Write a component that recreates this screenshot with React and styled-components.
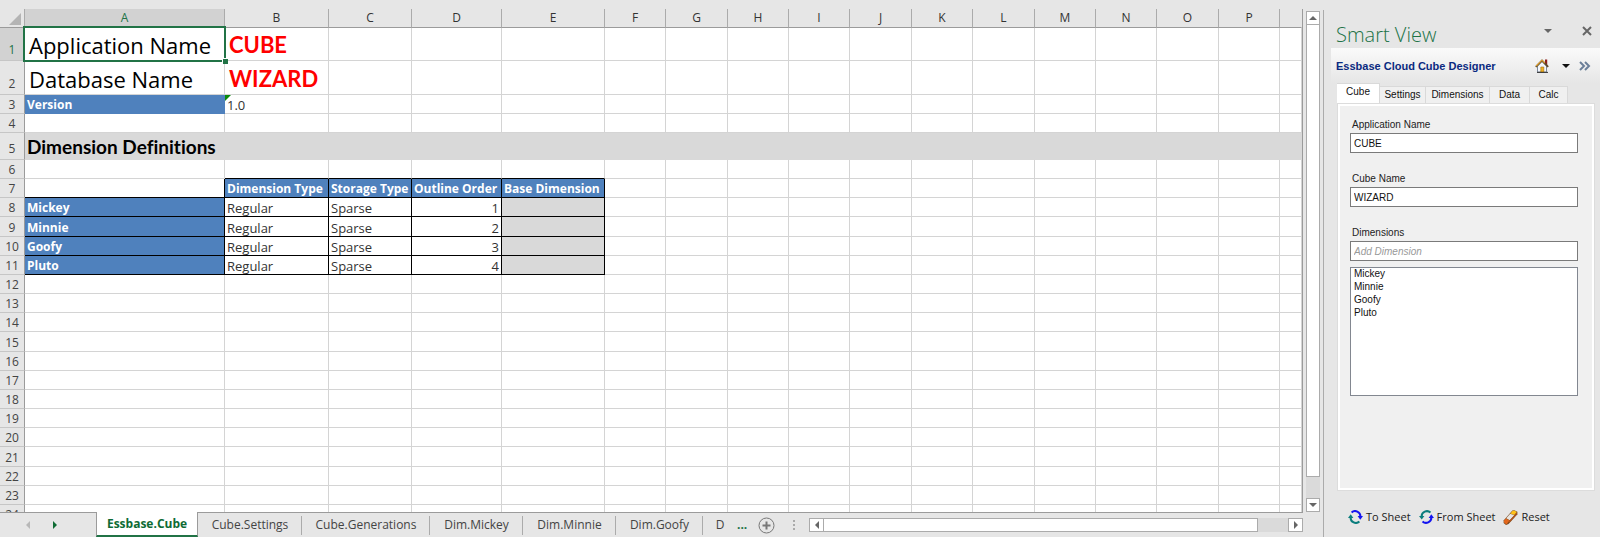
import React from "react";
import styled, { createGlobalStyle } from "styled-components";

const uiFont = '"Open Sans", "Noto Sans", sans-serif';
const formFont = '"Liberation Sans", Arial, sans-serif';

const GlobalStyle = createGlobalStyle`
  *, *::before, *::after { box-sizing: border-box; }
  body { margin: 0; background: #e6e6e6; font-family: ${uiFont}; font-size: 12px; color: #000; }
  button { border: 0; padding: 0; margin: 0; background: none; font: inherit; color: inherit; }
`;

const Window = styled.div`
  display: flex;
  height: 100vh;
  overflow: hidden;
  background: #e6e6e6;
`;

const Workbook = styled.main`
  flex: 1;
  min-width: 0;
  display: flex;
  flex-direction: column;
`;

const SheetArea = styled.div`
  flex: 1;
  min-height: 0;
  display: flex;
`;

const GridFrame = styled.div`
  flex: 1;
  min-width: 0;
  overflow: hidden;
  padding-top: 9px;
`;

const Grid = styled.table`
  width: 100%;
  table-layout: fixed;
  border-collapse: separate;
  border-spacing: 0;
  background: #fff;
  border-right: 1px solid #9b9b9b;
`;

const ColumnHead = styled.th`
  height: 19px;
  padding: 0;
  background: ${(p) => (p.$active ? "#d2d2d2" : "#e6e6e6")};
  color: ${(p) => (p.$active ? "#217346" : "#333")};
  border-right: 1px solid ${(p) => (p.$last ? "#e6e6e6" : "#ababab")};
  border-bottom: 1px solid #9b9b9b;
  font-weight: 400;
  line-height: 18px;
`;

const SelectAll = styled.button`
  display: block;
  width: 24px;
  height: 18px;
  padding: 4px 3px 2px 9px;
`;

const RowHead = styled.th`
  height: ${(p) => p.$height}px;
  padding: 0;
  background: ${(p) => (p.$active ? "#d2d2d2" : "#e6e6e6")};
  color: ${(p) => (p.$active ? "#217346" : "#444")};
  border-right: 1px solid #9b9b9b;
  border-bottom: 1px solid #c6c6c6;
  font-weight: 400;
  line-height: ${(p) => (p.$height > 20 ? 20 : 16)}px;
  vertical-align: bottom;
`;

const fills = { key: "#4f81bd", band: "#d9d9d9", none: "#fff" };

const Cell = styled.td`
  position: relative;
  padding: 0 2px;
  background: ${(p) => fills[p.$fill || "none"]};
  border-right: 1px solid
    ${(p) => (p.$darkRight ? "#000" : p.$flat ? fills[p.$fill] : "#d4d4d4")};
  border-bottom: 1px solid
    ${(p) => (p.$darkBottom ? "#000" : p.$flat ? fills[p.$fill] : "#d4d4d4")};
  color: ${(p) => (p.$fill === "key" ? "#fff" : "#333")};
  font-size: ${(p) => (p.$fill === "key" ? 12 : 13)}px;
  font-weight: ${(p) => (p.$fill === "key" ? 700 : 400)};
  line-height: 16px;
  text-align: ${(p) => (p.$number ? "right" : "left")};
  vertical-align: bottom;
  white-space: nowrap;
`;

const TitleText = styled.span`
  display: block;
  padding-left: 2px;
  font-size: 22px;
  line-height: 30px;
  color: #000;
`;

const RedText = styled(TitleText)`
  font-family: Lato, sans-serif;
  font-weight: 700;
  color: #f00;
`;

const SectionText = styled.span`
  display: block;
  font-family: Lato, sans-serif;
  font-size: 19px;
  font-weight: 700;
  font-variant-ligatures: none;
  line-height: 24px;
  color: #000;
`;

const Selection = styled.span`
  position: absolute;
  inset: -2px;
  border: 2px solid #217346;
  z-index: 1;

  &::after {
    content: "";
    position: absolute;
    right: -4px;
    bottom: -4px;
    width: 6px;
    height: 6px;
    background: #217346;
    border: solid #fff;
    border-width: 1px 0 0 1px;
  }
`;

const ErrorMark = styled.svg`
  position: absolute;
  left: 0;
  top: 0;
`;

const VerticalBar = styled.div`
  display: flex;
  flex-direction: column;
  width: 14px;
  margin: 11px 3px 0;
  background: #dadada;
`;

const ArrowButton = styled.button`
  display: grid;
  place-items: center;
  flex: none;
  width: ${(p) => (p.$wide ? 15 : 14)}px;
  height: 14px;
  background: #fff;
  border: 1px solid #ababab;
`;

const VerticalThumb = styled.div`
  flex: 1;
  margin: -1px 0 21px;
  background: #fff;
  border: 1px solid #ababab;
`;

const TabBar = styled.div`
  display: flex;
  height: 25px;
  margin-right: 20px;
`;

const TabNav = styled.div`
  display: flex;
  align-items: center;
  width: 96px;
  gap: 21px;
  padding-left: 25px;
  border-top: 1px solid #9b9b9b;
`;

const NavButton = styled.button`
  display: grid;
  place-items: center;
  width: 6px;
  height: 12px;
`;

const SheetTab = styled.button`
  width: ${(p) => p.$width}px;
  flex: none;
  display: flex;
  align-items: center;
  justify-content: center;
  position: relative;
  padding-bottom: ${(p) => (p.$active ? 0 : 1)}px;
  background: ${(p) => (p.$active ? "#fff" : "transparent")};
  color: ${(p) => (p.$active ? "#0e6b34" : "#444")};
  font-weight: ${(p) => (p.$active ? 700 : 400)};
  border: solid #9b9b9b;
  border-width: ${(p) => (p.$active ? "0 1px 2px" : "1px 0 0")};
  ${(p) => p.$active && "border-bottom-color: #217346;"}

  &::after {
    content: "";
    display: ${(p) => (p.$divider ? "block" : "none")};
    position: absolute;
    right: 0;
    top: 3px;
    width: 1px;
    height: 19px;
    background: #ababab;
  }
`;

const TabTools = styled.div`
  flex: 1;
  min-width: 0;
  display: flex;
  align-items: center;
  border-top: 1px solid #9b9b9b;
`;

const MoreTabs = styled.button`
  width: 13px;
  color: #217346;
  font-weight: 700;
  line-height: 18px;
  text-align: left;
`;

const AddSheet = styled.button`
  width: 17px;
  height: 17px;
  margin-left: 8px;
`;

const Grip = styled.svg`
  flex: none;
  margin: 0 14px 0 18px;
`;

const HorizontalBar = styled.div`
  flex: 1;
  display: flex;
  height: 14px;
  background: #dadada;
`;

const HorizontalThumb = styled.div`
  flex: 1;
  margin: 0 30px 0 -1px;
  background: #fff;
  border: 1px solid #ababab;
`;

const Panel = styled.aside`
  width: 277px;
  flex: none;
  display: flex;
  flex-direction: column;
  margin-top: 10px;
  border-left: 1px solid #ababab;
  padding-left: 7px;
`;

const PanelTitleBar = styled.header`
  display: flex;
  align-items: center;
  height: 38px;
  padding: 4px 3px 0 5px;
`;

const PanelTitle = styled.h1`
  flex: 1;
  margin: 0;
  padding-top: 7px;
  font-size: 20px;
  font-weight: 300;
  line-height: 26px;
  color: #217346;
`;

const IconButton = styled.button`
  display: grid;
  place-items: center;
  flex: none;
  width: ${(p) => p.$width}px;
  height: 18px;
`;

const Toolbar = styled.div`
  display: flex;
  align-items: center;
  height: 35px;
  padding: 0 9px 0 5px;
  background: linear-gradient(#fafafa, #e6e6e6);
`;

const ToolbarTitle = styled.h2`
  flex: 1;
  margin: 0;
  font-family: ${formFont};
  font-size: 11px;
  line-height: 16px;
  font-weight: 700;
  color: #0a2a80;
`;

const FormTabs = styled.div`
  display: flex;
  align-items: flex-end;
  height: 20px;
  padding-left: 6px;
`;

const FormTab = styled.button`
  width: ${(p) => p.$width}px;
  height: ${(p) => (p.$active ? 20 : 17)}px;
  padding-bottom: ${(p) => (p.$active ? 3 : 0)}px;
  background: ${(p) => (p.$active ? "#fff" : "#f0f0f0")};
  border: solid #d9d9d9;
  border-width: 1px 1px 0 0;
  font-family: ${formFont};
  font-size: 10px;
  line-height: 14px;
  color: #111;
`;

const FormPage = styled.form`
  flex: 1;
  display: flex;
  flex-direction: column;
  margin: 0 5px 0 6px;
  padding: 13px 14px 0 10px;
  background: #f0f0f0;
  border: 3px solid #fff;
  outline: 1px solid #dcdcdc;
  outline-offset: -1px;
`;

const Field = styled.div`
  display: flex;
  flex-direction: column;
  margin-bottom: ${(p) => (p.$tight ? 6 : 20)}px;
`;

const Label = styled.label`
  padding-left: 2px;
  margin-bottom: 2px;
  font-family: ${formFont};
  font-size: 10px;
  line-height: 12px;
  color: #222;
`;

const TextBox = styled.input`
  width: 100%;
  height: 20px;
  padding: 0 3px;
  background: #fff;
  border: 1px solid #7a7a7a;
  border-radius: 0;
  font-family: ${formFont};
  font-size: 10px;
  line-height: 14px;
  color: #111;

  &::placeholder { color: #999; font-style: italic; opacity: 1; }
`;

const ListBox = styled.select`
  width: 100%;
  height: 129px;
  padding: 0 3px;
  background: #fff;
  border: 1px solid #828790;
  border-radius: 0;
  overflow: hidden;
  font-family: ${formFont};
  font-size: 10px;
  color: #111;

  option { padding: 0; min-height: 13px; line-height: 13px; height: 13px; }
`;

const Actions = styled.footer`
  display: flex;
  align-items: center;
  gap: 8px;
  height: 46px;
  padding: 6px 0 0 17px;
`;

const Action = styled.button`
  display: flex;
  align-items: center;
  gap: 3px;
  font-size: 11px;
  line-height: 16px;
  color: #222;
  white-space: nowrap;
`;

function Triangle({ dir, color = "#666", size = 4 }) {
  const s = size;
  const shapes = {
    up: `0,${s} ${s * 2},${s} ${s},0`,
    down: `0,0 ${s * 2},0 ${s},${s}`,
    left: `${s},0 ${s},${s * 2} 0,${s}`,
    right: `0,0 0,${s * 2} ${s},${s}`,
  };
  const tall = dir === "left" || dir === "right";
  return (
    <svg width={tall ? s : s * 2} height={tall ? s * 2 : s} aria-hidden="true">
      <polygon points={shapes[dir]} fill={color} />
    </svg>
  );
}

function HomeIcon() {
  return (
    <svg width="14" height="14" viewBox="0 0 14 14" aria-hidden="true">
      <path d="M10 .5h2.2v6H10z" fill="#8c1c1c" />
      <path d="M2.5 7 7 2.4 11.5 7v6h-9z" fill="#f4f6fa" stroke="#7d8899" strokeWidth="1" />
      <path d="M5.8 8h3v5h-3z" fill="#f0b020" stroke="#9a6b10" strokeWidth=".6" />
      <path d="M.8 7.8 7 1.5l6.2 6.3" fill="none" stroke="#5e4a2a" strokeWidth="1.8" />
      <path d="M1.2 7 7 1.2 9.8 4" fill="none" stroke="#e0a030" strokeWidth="1.1" />
      <path d="M2 13.4h11" stroke="#333" />
    </svg>
  );
}

function SyncIcon({ flip }) {
  const first = flip ? "#0b7d7d" : "#1414f0";
  const second = flip ? "#1414f0" : "#0b7d7d";
  return (
    <svg width="15" height="14" viewBox="0 0 15 14" aria-hidden="true">
      {flip ? (
        <>
          <path d="M11.5 2.6A5.3 5.3 0 0 0 2.6 6.5" fill="none" stroke={first} strokeWidth="2" />
          <path d="M0 6h5.4L2.7 9.6z" fill={first} />
          <path d="M3.5 11.4a5.3 5.3 0 0 0 8.9-3.9" fill="none" stroke={second} strokeWidth="2" />
          <path d="M15 8H9.6l2.7-3.8z" fill={second} />
        </>
      ) : (
        <>
          <path d="M3.6 2.4A5.3 5.3 0 0 1 12.4 6.5" fill="none" stroke={first} strokeWidth="2" />
          <path d="M9.6 6H15l-2.7 3.8z" fill={first} />
          <path d="M11.4 11.6A5.3 5.3 0 0 1 2.6 7.5" fill="none" stroke={second} strokeWidth="2" />
          <path d="M0 8h5.4L2.7 4.2z" fill={second} />
        </>
      )}
    </svg>
  );
}

function EraserIcon() {
  return (
    <svg width="15" height="15" viewBox="0 0 15 15" aria-hidden="true">
      <path d="M9.4.6 11.4.2l3 1.6v2.4L5.6 14l-2.6 1L.6 13v-2.6z" fill="#7a4a20" />
      <path d="M9.4 1 11.4.6l2.4 1.4-2.6 3-3.8-1.6z" fill="#ffc21a" />
      <path d="M7.2 3.7l4 1.6-4.4 5-3.6-2z" fill="#e8e4e0" />
      <path d="M3.1 8.6l3.4 2-3 3.8L1 12.6v-2z" fill="#e2661c" />
      <path d="M11.3 5.4l2.7-3v1.8L6 13v-2z" fill="#b5541a" />
    </svg>
  );
}

const columns = [
  ["A", 200], ["B", 104], ["C", 83], ["D", 90], ["E", 103], ["F", 61],
  ["G", 62], ["H", 61], ["I", 61], ["J", 62], ["K", 61], ["L", 62],
  ["M", 61], ["N", 61], ["O", 62], ["P", 61], ["", null],
];

const rowHeights = [
  33, 34, 19, 19, 27, 19, 19, 19, 20, 19, 19, 19,
  19, 19, 20, 19, 19, 19, 19, 19, 20, 19, 19, 19,
];

const dimensionHeads = ["Dimension Type", "Storage Type", "Outline Order", "Base Dimension"];
const dimensions = ["Mickey", "Minnie", "Goofy", "Pluto"];

function describeCell(row, col) {
  if (row === 1 && col === 0) {
    return { content: <><TitleText>Application Name</TitleText><Selection /></> };
  }
  if (row === 1 && col === 1) return { content: <RedText>CUBE</RedText> };
  if (row === 2 && col === 0) return { content: <TitleText>Database Name</TitleText> };
  if (row === 2 && col === 1) return { content: <RedText>WIZARD</RedText> };
  if (row === 3 && col === 0) return { content: "Version", fill: "key", flat: true };
  if (row === 3 && col === 1) {
    return {
      content: (
        <>
          <ErrorMark width="6" height="6" aria-hidden="true">
            <polygon points="0,0 6,0 0,6" fill="#0a8a0a" />
          </ErrorMark>
          1.0
        </>
      ),
    };
  }
  if (row === 5) {
    return {
      content: col === 0 ? <SectionText>Dimension Definitions</SectionText> : null,
      fill: "band",
      flat: true,
    };
  }
  if (row === 6 && col >= 1 && col <= 4) return { darkBottom: true };
  if (row === 7 && col === 0) return { darkRight: true, darkBottom: true };
  if (row === 7 && col <= 4) {
    return { content: dimensionHeads[col - 1], fill: "key", darkRight: true, darkBottom: true };
  }
  if (row >= 8 && row <= 11 && col <= 4) {
    const index = row - 8;
    const values = [dimensions[index], "Regular", "Sparse", index + 1, null];
    return {
      content: values[col],
      fill: col === 0 ? "key" : col === 4 ? "band" : "none",
      number: col === 3,
      darkRight: true,
      darkBottom: true,
    };
  }
  return {};
}

function Spreadsheet() {
  return (
    <Grid>
      <colgroup>
        <col style={{ width: 25 }} />
        {columns.map(([name, width]) => (
          <col key={name || "rest"} style={width ? { width } : undefined} />
        ))}
      </colgroup>
      <thead>
        <tr>
          <ColumnHead>
            <SelectAll aria-label="Select all">
              <svg width="12" height="12" aria-hidden="true" display="block">
                <polygon points="12,0 12,12 0,12" fill="#b4b4b4" />
              </svg>
            </SelectAll>
          </ColumnHead>
          {columns.map(([name], i) => (
            <ColumnHead key={i} scope="col" $active={i === 0} $last={i === columns.length - 1}>
              {name}
            </ColumnHead>
          ))}
        </tr>
      </thead>
      <tbody>
        {rowHeights.map((height, r) => (
          <tr key={r}>
            <RowHead scope="row" $height={height} $active={r === 0}>{r + 1}</RowHead>
            {columns.map((_, c) => {
              const cell = describeCell(r + 1, c);
              return (
                <Cell
                  key={c}
                  $fill={cell.fill}
                  $flat={cell.flat}
                  $number={cell.number}
                  $darkRight={cell.darkRight}
                  $darkBottom={cell.darkBottom}
                >
                  {cell.content}
                </Cell>
              );
            })}
          </tr>
        ))}
      </tbody>
    </Grid>
  );
}

const sheetTabs = [
  ["Essbase.Cube", 102], ["Cube.Settings", 104], ["Cube.Generations", 128],
  ["Dim.Mickey", 93], ["Dim.Minnie", 93], ["Dim.Goofy", 87], ["D", 34],
];

const formTabs = [
  ["Cube", 43], ["Settings", 46], ["Dimensions", 64], ["Data", 40], ["Calc", 38],
];

export default function App() {
  return (
    <Window>
      <GlobalStyle />
      <Workbook>
        <SheetArea>
          <GridFrame>
            <Spreadsheet />
          </GridFrame>
          <VerticalBar>
            <ArrowButton aria-label="Scroll up"><Triangle dir="up" /></ArrowButton>
            <VerticalThumb />
            <ArrowButton aria-label="Scroll down"><Triangle dir="down" /></ArrowButton>
          </VerticalBar>
        </SheetArea>
        <TabBar>
          <TabNav>
            <NavButton aria-label="Previous sheet"><Triangle dir="left" color="#b8b8b8" /></NavButton>
            <NavButton aria-label="Next sheet"><Triangle dir="right" color="#0e6b34" /></NavButton>
          </TabNav>
          {sheetTabs.map(([name, width], i) => (
            <SheetTab key={name} $width={width} $active={i === 0} $divider={i > 0 && i < 6}>
              {name}
            </SheetTab>
          ))}
          <TabTools>
            <MoreTabs aria-label="More sheets">...</MoreTabs>
            <AddSheet aria-label="New sheet">
              <svg width="17" height="17" fill="none" stroke="#777" display="block" aria-hidden="true">
                <circle cx="8.5" cy="8.5" r="7.5" />
                <path d="M4.5 8.5h8M8.5 4.5v8" strokeWidth="2" />
              </svg>
            </AddSheet>
            <Grip width="2" height="11" fill="#aaa" aria-hidden="true">
              <path d="M0 0h2v2H0zM0 4h2v2H0zM0 8h2v2H0z" />
            </Grip>
            <HorizontalBar>
              <ArrowButton $wide aria-label="Scroll left"><Triangle dir="left" /></ArrowButton>
              <HorizontalThumb />
              <ArrowButton $wide aria-label="Scroll right"><Triangle dir="right" /></ArrowButton>
            </HorizontalBar>
          </TabTools>
        </TabBar>
      </Workbook>

      <Panel>
        <PanelTitleBar>
          <PanelTitle>Smart View</PanelTitle>
          <IconButton $width={58} aria-label="Panel options"><Triangle dir="down" /></IconButton>
          <IconButton $width={20} aria-label="Close panel">
            <svg width="10" height="10" stroke="#666" strokeWidth="2" aria-hidden="true">
              <path d="M1 1l8 8M9 1l-8 8" />
            </svg>
          </IconButton>
        </PanelTitleBar>
        <Toolbar>
          <ToolbarTitle>Essbase Cloud Cube Designer</ToolbarTitle>
          <IconButton $width={22} aria-label="Home"><HomeIcon /></IconButton>
          <IconButton $width={26} aria-label="Home options"><Triangle dir="down" color="#111" /></IconButton>
          <IconButton $width={12} aria-label="More">
            <svg width="12" height="10" fill="none" stroke="#6b7f99" strokeWidth="2" aria-hidden="true">
              <path d="M1 1l4 4-4 4M6 1l4 4-4 4" />
            </svg>
          </IconButton>
        </Toolbar>
        <FormTabs role="tablist">
          {formTabs.map(([name, width], i) => (
            <FormTab key={name} role="tab" aria-selected={i === 0} $width={width} $active={i === 0}>
              {name}
            </FormTab>
          ))}
        </FormTabs>
        <FormPage>
          <Field>
            <Label htmlFor="application-name">Application Name</Label>
            <TextBox id="application-name" defaultValue="CUBE" />
          </Field>
          <Field>
            <Label htmlFor="cube-name">Cube Name</Label>
            <TextBox id="cube-name" defaultValue="WIZARD" />
          </Field>
          <Field $tight>
            <Label htmlFor="add-dimension">Dimensions</Label>
            <TextBox id="add-dimension" placeholder="Add Dimension" />
          </Field>
          <ListBox size={9} aria-label="Dimension list">
            {dimensions.map((name) => <option key={name}>{name}</option>)}
          </ListBox>
        </FormPage>
        <Actions>
          <Action><SyncIcon />To Sheet</Action>
          <Action><SyncIcon flip />From Sheet</Action>
          <Action><EraserIcon />Reset</Action>
        </Actions>
      </Panel>
    </Window>
  );
}
